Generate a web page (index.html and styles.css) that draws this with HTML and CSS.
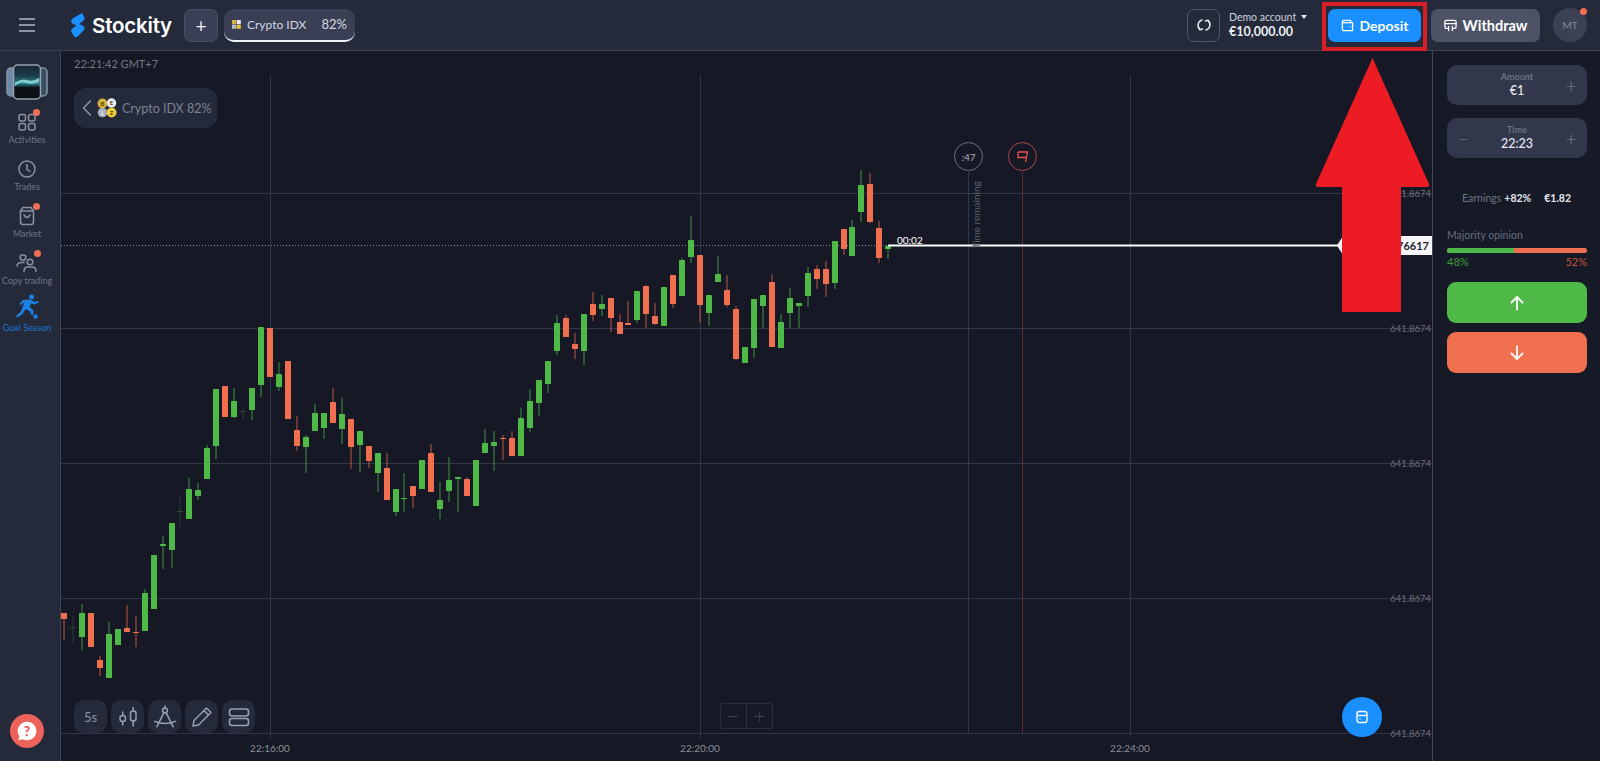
FILE: index.html
```html
<!DOCTYPE html>
<html lang="en">
<head>
    <meta charset="UTF-8">
    <title>Stockity | Trading</title>
    <meta name="viewport" content="width=device-width, initial-scale=1.0">
    <link rel="stylesheet" href="styles.css">
</head>
<body>

    <!-- Top bar -->
    <header class="topbar">
        <div class="menu-icon"><span></span><span></span><span></span></div>

        <div class="brand">
            <svg class="brand-mark" viewBox="0 0 16 26">
                <path d="M12 1 L14.5 5.5 Q15 8 12.5 9.5 L9 12 L12.5 13.5 Q15.5 15 14 18 L7 25 Q4 26 3.5 23.5 L1 19 Q1 17.5 3 16 L6.5 13.5 L3 12 Q0 10 2 7 Z" fill="#1a8fff"/>
            </svg>
            <span class="brand-name">Stockity</span>
        </div>

        <button class="add-tab">+</button>

        <div class="asset-tab">
            <svg class="tab-coins" viewBox="0 0 10 10">
                <rect width="4.6" height="4.6" fill="#d9b23c"/>
                <rect x="5.2" width="4.6" height="4.6" fill="#e8e8e8"/>
                <rect y="5.2" width="4.6" height="4.6" fill="#b9bcc6"/>
                <rect x="5.2" y="5.2" width="4.6" height="4.6" fill="#e9c635"/>
            </svg>
            <span class="tab-name">Crypto IDX</span>
            <span class="tab-pct">82%</span>
        </div>

        <div class="topbar-right">
            <button class="swap-btn">
                <svg viewBox="0 0 16 16" width="16" height="16" fill="none" stroke="#e4e6ee" stroke-width="1.5" stroke-linecap="round" stroke-linejoin="round">
                    <path d="M6 3 A5.5 5.5 0 0 0 4 12.5"/>
                    <path d="M2.5 10 L4 12.8 L6.6 12"/>
                    <path d="M10 13 A5.5 5.5 0 0 0 12 3.5"/>
                    <path d="M13.5 6 L12 3.2 L9.4 4"/>
                </svg>
            </button>
            <div class="account">
                <div class="account-type">Demo account <span class="caret"></span></div>
                <div class="account-balance">€10,000.00</div>
            </div>
            <button class="deposit-btn">
                <svg viewBox="0 0 14 14" width="13" height="13" fill="none" stroke="#fff" stroke-width="1.4" stroke-linejoin="round">
                    <path d="M3 1.5 H10.5 V4 H12.5 V12.5 H3 Q1.5 12.5 1.5 11 V3 Q1.5 1.5 3 1.5 Z"/>
                    <path d="M1.5 4 H10.5"/>
                    <path d="M9.5 8.2 H10.5"/>
                </svg>
                Deposit
            </button>
            <button class="withdraw-btn">
                <svg viewBox="0 0 14 14" width="13" height="13" fill="none" stroke="#fff" stroke-width="1.4" stroke-linejoin="round" stroke-linecap="round">
                    <path d="M4 10 H2.5 Q1 10 1 8.5 V3 Q1 1.5 2.5 1.5 H11.5 Q13 1.5 13 3 V8.5 Q13 10 11.5 10 H10"/>
                    <path d="M1 5 H13"/>
                    <path d="M5 8 V12.5 M9 8 V12.5"/>
                </svg>
                Withdraw
            </button>
            <div class="avatar">MT<span class="dot avatar-dot"></span></div>
        </div>
    </header>

    <div class="workspace">

        <!-- Left menu -->
        <nav class="sidebar">
            <svg class="promo-thumb" viewBox="0 0 42 36">
                <defs>
                    <linearGradient id="promoFill" x1="0" y1="0" x2="0" y2="1">
                        <stop offset="0" stop-color="#14262f"/>
                        <stop offset="0.3" stop-color="#1d3a48"/>
                        <stop offset="0.55" stop-color="#2f7f88"/>
                        <stop offset="0.66" stop-color="#0d1519"/>
                        <stop offset="1" stop-color="#0a0e12"/>
                    </linearGradient>
                </defs>
                <rect x="1" y="4" width="12" height="28" rx="4" fill="#6b8aa8" stroke="#8d93a6" stroke-width="1.5"/>
                <rect x="29" y="4" width="12" height="28" rx="4" fill="#34505f" stroke="#8d93a6" stroke-width="1.5"/>
                <rect x="7.5" y="1" width="27" height="34" rx="4" fill="url(#promoFill)" stroke="#9ba0b0" stroke-width="1.5"/>
                <path d="M9 19 Q15 14 21 16 T33 14 V18 Q26 21 20 19 T9 22 Z" fill="#7fd0d0"/>
            </svg>

            <a class="nav-item">
                <span class="nav-icon">
                    <svg viewBox="0 0 20 20" width="20" height="20" fill="none" stroke="#8b90a3" stroke-width="1.5">
                        <rect x="2" y="2.5" width="6.5" height="6.5" rx="2"/>
                        <rect x="11.5" y="2.5" width="6.5" height="6.5" rx="2"/>
                        <rect x="2" y="11.5" width="6.5" height="6.5" rx="2"/>
                        <rect x="11.5" y="11.5" width="6.5" height="6.5" rx="2"/>
                    </svg>
                    <span class="dot nav-dot"></span>
                </span>
                Activities
            </a>
            <a class="nav-item">
                <span class="nav-icon">
                    <svg viewBox="0 0 20 20" width="20" height="20" fill="none" stroke="#8b90a3" stroke-width="1.5" stroke-linecap="round">
                        <circle cx="10" cy="10" r="8"/>
                        <path d="M10 5.5 V10.5 L13 12.5"/>
                    </svg>
                </span>
                Trades
            </a>
            <a class="nav-item">
                <span class="nav-icon">
                    <svg viewBox="0 0 20 20" width="20" height="20" fill="none" stroke="#8b90a3" stroke-width="1.5" stroke-linecap="round">
                        <path d="M6 1.5 H14 L16.5 5 V16 Q16.5 18.5 14 18.5 H6 Q3.5 18.5 3.5 16 V5 Z"/>
                        <path d="M3.5 5 H16.5"/>
                        <path d="M7 9 Q10 14 13 9"/>
                    </svg>
                    <span class="dot nav-dot"></span>
                </span>
                Market
            </a>
            <a class="nav-item">
                <span class="nav-icon">
                    <svg viewBox="0 0 22 20" width="22" height="20" fill="none" stroke="#8b90a3" stroke-width="1.5" stroke-linecap="round">
                        <circle cx="7" cy="4.5" r="2.8"/>
                        <path d="M1 13 Q1 9.5 6 9.5 H8"/>
                        <circle cx="14" cy="9" r="2.8"/>
                        <path d="M8 18.5 Q8 14 12 14 H16 Q20 14 20 18.5"/>
                    </svg>
                    <span class="dot nav-dot"></span>
                </span>
                Copy trading
            </a>
            <a class="nav-item nav-item-active">
                <span class="nav-icon nav-icon-goal">
                    <svg viewBox="0 0 24 26" width="24" height="26" fill="#1a82e6">
                        <circle cx="16.5" cy="3" r="2.4"/>
                        <path d="M8 6 L15 5.5 L20 8 L23 6.8 L23.5 8.5 L19.5 10.5 L16 9.2 L14.5 13 L18.5 16.5 L18 21 L15.8 21 L15.5 17.5 L10.5 15 L7.5 20 L2 23.5 L1 22 L5.5 18 L8.5 11 L9.5 8 L6 11 L4.5 10 Z"/>
                        <circle cx="20.5" cy="22.5" r="2.2"/>
                    </svg>
                </span>
                Goal Season
            </a>

            <button class="help-btn">
                <svg viewBox="0 0 20 20" width="22" height="22">
                    <path d="M10 1.5 A8.5 8.5 0 1 1 6 17.5 L2 18.5 L3.2 15 A8.5 8.5 0 0 1 10 1.5 Z" fill="#fff"/>
                    <text x="10" y="14.5" class="help-mark">?</text>
                </svg>
            </button>
        </nav>

        <!-- Chart area -->
        <main class="chart">
            <svg class="chart-canvas" viewBox="61 51 1371 710">
                <g class="grid-lines">
                    <line x1="61" y1="193.5" x2="1432" y2="193.5"/>
                    <line x1="61" y1="328.5" x2="1432" y2="328.5"/>
                    <line x1="61" y1="463.5" x2="1432" y2="463.5"/>
                    <line x1="61" y1="598.5" x2="1432" y2="598.5"/>
                    <line x1="61" y1="733.5" x2="1432" y2="733.5"/>
                    <line x1="270.5" y1="75" x2="270.5" y2="738"/>
                    <line x1="700.5" y1="75" x2="700.5" y2="738"/>
                    <line x1="1130.5" y1="75" x2="1130.5" y2="738"/>
                    <line x1="968.5" y1="172" x2="968.5" y2="733"/>
                </g>
                <line class="expiry-line" x1="1022.5" y1="172" x2="1022.5" y2="733"/>

                <line class="price-dots" x1="61" y1="245.5" x2="888" y2="245.5"/>
                <g id="candles"></g>
                <line class="price-line" x1="888" y1="245.5" x2="1340" y2="245.5"/>
                <text class="timer-text" x="897" y="244">00:02</text>

                <circle class="marker" cx="968.5" cy="156.5" r="14"/>
                <text class="marker-text" x="968.5" y="160.5">:47</text>
                <text class="remaining" transform="rotate(-90 977 215)" x="977" y="218">Time remaining</text>

                <circle class="marker marker-red" cx="1022.5" cy="156.5" r="14"/>
                <path class="flag" d="M1018 152 H1027.5 L1025.5 162 M1018 152 V157.5 H1026.5"/>

                <path class="price-tag" d="M1337 245.5 L1343 236 H1432 V255 H1343 Z"/>
                <text class="price-tag-text" x="1429" y="250">641.876617</text>

                <g class="axis-y">
                    <text x="1431" y="197">641.8674</text>
                    <text x="1431" y="332">641.8674</text>
                    <text x="1431" y="467">641.8674</text>
                    <text x="1431" y="602">641.8674</text>
                    <text x="1431" y="737">641.8674</text>
                </g>
                <g class="axis-x">
                    <text x="270" y="752">22:16:00</text>
                    <text x="700" y="752">22:20:00</text>
                    <text x="1130" y="752">22:24:00</text>
                </g>
            </svg>

            <div class="clock">22:21:42 GMT+7</div>

            <div class="asset-back">
                <svg class="back-chevron" viewBox="0 0 10 18" width="10" height="18" fill="none" stroke="#8b90a3" stroke-width="1.6" stroke-linecap="round" stroke-linejoin="round">
                    <path d="M8.5 2 L1.5 9 L8.5 16"/>
                </svg>
                <svg class="back-coins" viewBox="0 0 22 22" width="20" height="20">
                    <circle cx="6" cy="6" r="5.4" fill="#d9b23c"/>
                    <circle cx="16" cy="5.5" r="5.2" fill="#eceff4"/>
                    <circle cx="6" cy="16" r="5.2" fill="#aab0c0"/>
                    <circle cx="16" cy="16" r="5.4" fill="#f0cf3a"/>
                    <text x="6" y="8.5" class="coin-letter">B</text>
                    <text x="16" y="8" class="coin-letter">E</text>
                    <text x="6" y="18.5" class="coin-letter coin-light">L</text>
                    <text x="16" y="18.5" class="coin-letter">Z</text>
                </svg>
                <span>Crypto IDX 82%</span>
            </div>

            <div class="chart-tools">
                <button class="tool-btn">5s</button>
                <button class="tool-btn">
                    <svg viewBox="0 0 22 22" width="22" height="22" fill="none" stroke="#9a9fb1" stroke-width="1.5" stroke-linecap="round">
                        <rect x="3" y="9.5" width="5.5" height="6" rx="2.5"/>
                        <path d="M5.7 6 V9.5 M5.7 15.5 V19"/>
                        <rect x="13.5" y="5" width="5.5" height="10" rx="2.5"/>
                        <path d="M16.2 1.5 V5 M16.2 15 V20"/>
                    </svg>
                </button>
                <button class="tool-btn">
                    <svg viewBox="0 0 22 22" width="24" height="24" fill="none" stroke="#9a9fb1" stroke-width="1.4" stroke-linecap="round" stroke-linejoin="round">
                        <circle cx="11" cy="5" r="2.2"/>
                        <path d="M10 7 L3.5 20 M12 7 L18.5 20"/>
                        <path d="M1.5 15 Q11 19 20.5 15"/>
                        <path d="M11 1 V2.8"/>
                    </svg>
                </button>
                <button class="tool-btn">
                    <svg viewBox="0 0 22 22" width="22" height="22" fill="none" stroke="#9a9fb1" stroke-width="1.5" stroke-linejoin="round">
                        <path d="M15.5 2 L20 6.5 L7.5 19 L2 20 L3 14.5 Z"/>
                        <path d="M13 4.5 L17.5 9"/>
                    </svg>
                </button>
                <button class="tool-btn">
                    <svg viewBox="0 0 22 22" width="22" height="22" fill="none" stroke="#9a9fb1" stroke-width="1.6">
                        <rect x="1.5" y="3" width="19" height="7" rx="2.5"/>
                        <rect x="1.5" y="12.5" width="19" height="7" rx="2.5"/>
                    </svg>
                </button>
            </div>

            <div class="zoom-box">
                <span class="zoom-part">−</span>
                <span class="zoom-part">+</span>
            </div>

            <button class="fab">
                <svg viewBox="0 0 14 14" width="14" height="14" fill="none" stroke="#fff" stroke-width="1.4" stroke-linejoin="round">
                    <rect x="2" y="1.5" width="10" height="11" rx="2.2"/>
                    <path d="M2 5.5 H12"/>
                    <path d="M4.5 9 H5.5"/>
                </svg>
            </button>
        </main>

        <!-- Trade panel -->
        <aside class="panel">
            <div class="stepper">
                <span class="step-sign step-dim">−</span>
                <div class="step-value">
                    <small>Amount</small>
                    <strong>€1</strong>
                </div>
                <span class="step-sign">+</span>
            </div>
            <div class="stepper">
                <span class="step-sign">−</span>
                <div class="step-value">
                    <small>Time</small>
                    <strong>22:23</strong>
                </div>
                <span class="step-sign">+</span>
            </div>

            <div class="earnings">
                <span>Earnings</span>
                <b>+82%</b>
                <b class="earnings-sum">€1.82</b>
            </div>

            <div class="majority-title">Majority opinion</div>
            <div class="majority-bar"><div class="majority-up" style="width: 48%"></div></div>
            <div class="majority-nums">
                <span class="num-up">48%</span>
                <span class="num-down">52%</span>
            </div>

            <button class="trade-btn trade-up">
                <svg viewBox="0 0 16 16" width="16" height="16" fill="none" stroke="#fff" stroke-width="1.8" stroke-linecap="round" stroke-linejoin="round"><path d="M8 14.5 V2 M2.5 7.5 L8 2 L13.5 7.5"/></svg>
            </button>
            <button class="trade-btn trade-down">
                <svg viewBox="0 0 16 16" width="16" height="16" fill="none" stroke="#fff" stroke-width="1.8" stroke-linecap="round" stroke-linejoin="round"><path d="M8 1.5 V14 M2.5 8.5 L8 14 L13.5 8.5"/></svg>
            </button>
        </aside>
    </div>

    <!-- Red annotation drawn over the screenshot -->
    <div class="note-box"></div>
    <svg class="note-arrow" viewBox="0 0 114 256">
        <path d="M56.500 0 L113 126 Q114 129 111 129 H85 V254 H26 V129 H2 Q-1 129 0 126 Z" fill="#ed1c24"/>
    </svg>

    <script src="chart.js"></script>
</body>
</html>
```

FILE: styles.css
```css
* {
    box-sizing: border-box;
}

body {
    margin: 0;
    padding: 0;
    width: 100%;
    height: 100vh;
    overflow: hidden;
    position: relative;
    font-family: Lato, "Noto Sans", sans-serif;
    background-color: #161925;
    color: #fff;
}

button {
    font-family: inherit;
    border: none;
    padding: 0;
    cursor: pointer;
}

/* Top bar */
.topbar {
    height: 51px;
    display: flex;
    align-items: center;
    background-color: #252a3b;
    border-bottom: 1px solid #3e4356;
}

.menu-icon {
    width: 16px;
    margin-left: 19px;
    display: flex;
    flex-direction: column;
    gap: 4px;
}

.menu-icon span {
    height: 2px;
    background-color: #8e93a3;
}

.brand {
    width: 114px;
    margin-left: 35px;
    display: flex;
    align-items: center;
    gap: 6px;
}

.brand-mark {
    width: 16px;
    height: 26px;
}

.brand-name {
    font-family: Inter, sans-serif;
    font-size: 20.500px;
    font-weight: 600;
    letter-spacing: -0.2px;
}

.add-tab {
    width: 34px;
    height: 33px;
    border-radius: 7px;
    background-color: #3a3f56;
    border: 1px solid #4a4f66;
    color: #eceef4;
    font-size: 19px;
    line-height: 1;
}

.asset-tab {
    width: 131px;
    height: 33px;
    margin-left: 6px;
    padding: 0 8px;
    display: flex;
    align-items: center;
    background-color: #3a3f56;
    border-bottom: 2px solid #f0f1f5;
    border-radius: 10px;
    font-size: 13px;
    color: #d5d7e0;
}

.tab-coins {
    width: 9px;
    height: 9px;
}

.tab-name {
    margin-left: 6px;
    font-size: 12px;
}

.tab-pct {
    margin-left: auto;
}

.topbar-right {
    margin-left: auto;
    padding-right: 13px;
    display: flex;
    align-items: center;
}

.swap-btn {
    width: 33px;
    height: 33px;
    margin-right: 9px;
    background: none;
    border: 1px solid #50566c;
    border-radius: 7px;
    display: flex;
    justify-content: center;
    align-items: center;
}

.account {
    width: 99px;
}

.account-type {
    font-size: 10.500px;
    color: #cfd2dc;
    line-height: 14px;
}

.caret {
    display: inline-block;
    margin-left: 2px;
    vertical-align: 2px;
    border-left: 3.500px solid transparent;
    border-right: 3.500px solid transparent;
    border-top: 4px solid #e8e9ef;
}

.account-balance {
    font-size: 12.500px;
    font-weight: 700;
    line-height: 16px;
    color: #eceef4;
}

.deposit-btn,
.withdraw-btn {
    height: 33px;
    border-radius: 7px;
    display: flex;
    justify-content: center;
    align-items: center;
    gap: 6px;
    color: #fff;
    font-size: 14px;
    font-weight: 700;
}

.deposit-btn {
    width: 93px;
    margin-right: 10px;
    background-color: #1a8fff;
}

.withdraw-btn {
    width: 109px;
    margin-right: 13px;
    background-color: #4d5266;
    font-size: 14.500px;
}

.avatar {
    width: 34px;
    height: 34px;
    position: relative;
    border-radius: 50%;
    background-color: #3c4156;
    color: #858a9c;
    font-size: 10px;
    display: flex;
    justify-content: center;
    align-items: center;
}

.dot {
    position: absolute;
    width: 7px;
    height: 7px;
    border-radius: 50%;
    background-color: #ef6f54;
}

.avatar-dot {
    top: 0;
    right: 0;
}

/* Layout under the top bar */
.workspace {
    height: 710px;
    display: flex;
}

/* Left menu */
.sidebar {
    width: 61px;
    position: relative;
    padding: 13px 6px 0 0;
    display: flex;
    flex-direction: column;
    align-items: center;
    background-color: #252a3b;
    border-right: 1px solid #3e4356;
}

.promo-thumb {
    width: 42px;
    height: 36px;
    margin-bottom: 11px;
}

.nav-item {
    height: 47px;
    width: 100%;
    padding-top: 1px;
    display: flex;
    flex-direction: column;
    align-items: center;
    font-size: 9px;
    line-height: 14px;
    white-space: nowrap;
    color: #6f7488;
}

.nav-item-active {
    color: #1a72cc;
}

.nav-icon {
    height: 20px;
    margin-bottom: 1px;
    position: relative;
    display: block;
}

.nav-icon svg {
    display: block;
}

.nav-icon-goal {
    height: 26px;
    margin-top: -6px;
}

.nav-dot {
    top: -3px;
    right: -3px;
}

.help-btn {
    position: absolute;
    left: 10px;
    bottom: 13px;
    width: 34px;
    height: 34px;
    border-radius: 50%;
    background-color: #ee625c;
    display: flex;
    justify-content: center;
    align-items: center;
}

.help-mark {
    font-size: 12px;
    font-weight: 900;
    text-anchor: middle;
    fill: #e8554f;
}

/* Chart */
.chart {
    flex: 1;
    position: relative;
    overflow: hidden;
    background-color: #161925;
}

.chart-canvas {
    display: block;
    width: 1371px;
    height: 710px;
}

.grid-lines line {
    stroke: #32364a;
    stroke-width: 1;
}

.expiry-line {
    stroke: #5a2c35;
    stroke-width: 1;
}

.price-dots {
    stroke: #8a8d96;
    stroke-width: 1;
    stroke-dasharray: 1 2;
}

.price-line {
    stroke: #fff;
    stroke-width: 2;
}

.timer-text {
    font-size: 10px;
    fill: #fff;
}

.marker {
    fill: none;
    stroke: #6a6e7c;
    stroke-width: 1;
}

.marker-red {
    stroke: #a8494a;
}

.marker-text {
    font-size: 10px;
    font-weight: 700;
    text-anchor: middle;
    fill: #8c8f9b;
}

.remaining {
    font-size: 10px;
    text-anchor: middle;
    fill: #5c606c;
}

.flag {
    fill: none;
    stroke: #e8504c;
    stroke-width: 1.3;
}

.price-tag {
    fill: #f5f5f7;
}

.price-tag-text {
    font-size: 11px;
    font-weight: 700;
    text-anchor: end;
    fill: #23262f;
}

.axis-y text {
    font-size: 9.500px;
    text-anchor: end;
    fill: #6d707b;
}

.axis-x text {
    font-size: 10px;
    text-anchor: middle;
    fill: #8b8e98;
}

.clock {
    position: absolute;
    top: 6px;
    left: 13px;
    font-size: 11px;
    color: #737785;
}

.asset-back {
    position: absolute;
    top: 37px;
    left: 13px;
    width: 143px;
    height: 40px;
    padding-left: 8px;
    display: flex;
    align-items: center;
    gap: 5px;
    border-radius: 12px;
    background-color: #252a3a;
    color: #7e8292;
    font-size: 12.500px;
}

.coin-letter {
    font-size: 6.500px;
    font-weight: 900;
    text-anchor: middle;
    fill: #5c4a10;
}

.coin-light {
    fill: #f0f0f5;
}

.chart-tools {
    position: absolute;
    left: 13px;
    bottom: 28px;
    display: flex;
    gap: 4px;
}

.tool-btn {
    width: 33px;
    height: 33px;
    border-radius: 10px;
    background-color: #252a3a;
    color: #8b90a2;
    font-size: 13px;
    display: flex;
    justify-content: center;
    align-items: center;
}

.zoom-box {
    position: absolute;
    left: 659px;
    bottom: 32px;
    width: 53px;
    height: 26px;
    display: flex;
    border: 1px solid #2a2e3a;
    border-radius: 3px;
}

.zoom-part {
    flex: 1;
    display: flex;
    justify-content: center;
    align-items: center;
    font-size: 22px;
    font-weight: 300;
    line-height: 1;
    color: #3d414e;
}

.zoom-part + .zoom-part {
    border-left: 1px solid #2a2e3a;
}

.fab {
    position: absolute;
    left: 1281px;
    bottom: 24px;
    width: 40px;
    height: 40px;
    border-radius: 50%;
    background-color: #1a8fff;
    display: flex;
    justify-content: center;
    align-items: center;
}

/* Trade panel */
.panel {
    width: 168px;
    padding: 14px 13px 0 14px;
    background-color: #161a26;
    border-left: 1px solid #3e4356;
}

.stepper {
    height: 40px;
    margin-bottom: 13px;
    padding: 0 9px;
    display: flex;
    align-items: center;
    justify-content: space-between;
    border-radius: 10px;
    background-color: #32374b;
}

.step-sign {
    width: 14px;
    font-size: 20px;
    font-weight: 300;
    line-height: 1;
    text-align: center;
    color: #7b8092;
}

.step-dim {
    color: #474c60;
}

.step-value {
    display: flex;
    flex-direction: column;
    align-items: center;
}

.step-value small {
    font-size: 9px;
    line-height: 12px;
    font-weight: 700;
    color: #6c7184;
}

.step-value strong {
    font-size: 12.500px;
    line-height: 16px;
    font-weight: 500;
    color: #e6e8ee;
}

.earnings {
    margin-top: 33px;
    padding-left: 15px;
    display: flex;
    align-items: center;
    font-size: 10.500px;
    color: #6d7284;
    line-height: 14px;
}

.earnings b {
    margin-left: 3px;
    color: #e4e6ec;
}

.earnings .earnings-sum {
    margin-left: 13px;
}

.majority-title {
    margin-top: 23px;
    font-size: 10.500px;
    line-height: 14px;
    color: #686d7f;
}

.majority-bar {
    height: 5px;
    margin-top: 6px;
    border-radius: 3px;
    overflow: hidden;
    background-color: #ef6f4f;
}

.majority-up {
    height: 100%;
    background-color: #4eb84b;
}

.majority-nums {
    margin-top: 2px;
    display: flex;
    justify-content: space-between;
    font-size: 11px;
    line-height: 14px;
}

.num-up {
    color: #3f9c3e;
}

.num-down {
    color: #c2533f;
}

.trade-btn {
    width: 100%;
    height: 41px;
    margin-top: 9px;
    border-radius: 9px;
    display: flex;
    justify-content: center;
    align-items: center;
}

.trade-up {
    margin-top: 13px;
    background-color: #4fb948;
}

.trade-down {
    background-color: #ef6f4f;
}

/* Red annotation */
.note-box {
    position: absolute;
    top: 2px;
    left: 1322px;
    width: 105px;
    height: 49px;
    border: 4px solid #d81e27;
}

.note-arrow {
    position: absolute;
    top: 58px;
    left: 1316px;
    width: 114px;
    height: 256px;
}
```

FILE: chart.js
```js
// wick top, body top, body bottom, wick bottom, colour (f = faint doji)
const candles = [
    [613, 613, 619, 640, 'r'], [617, 627, 628, 643, 'f'], [604, 613, 637, 650, 'g'],
    [613, 613, 647, 647, 'r'], [656, 660, 668, 676, 'r'], [622, 634, 678, 678, 'g'],
    [629, 629, 645, 645, 'g'], [605, 628, 632, 632, 'r'], [616, 632, 633, 647, 'r'],
    [589, 593, 631, 631, 'g'], [555, 555, 609, 609, 'g'], [536, 544, 546, 569, 'g'],
    [523, 523, 550, 568, 'g'], [495, 511, 512, 527, 'f'], [478, 489, 519, 519, 'g'],
    [483, 490, 496, 500, 'g'], [445, 448, 479, 479, 'g'], [389, 389, 446, 459, 'g'],
    [386, 386, 417, 417, 'r'], [388, 401, 417, 418, 'g'], [407, 411, 412, 420, 'f'],
    [388, 388, 410, 420, 'g'], [327, 327, 385, 397, 'g'], [328, 328, 377, 377, 'r'],
    [362, 374, 387, 391, 'g'], [361, 361, 419, 419, 'r'], [416, 430, 446, 451, 'r'],
    [435, 437, 447, 473, 'g'], [404, 413, 431, 431, 'g'], [413, 413, 428, 439, 'g'],
    [388, 402, 423, 423, 'r'], [398, 414, 429, 444, 'g'], [419, 419, 447, 469, 'r'],
    [431, 431, 445, 472, 'g'], [446, 446, 461, 468, 'r'], [453, 453, 473, 492, 'g'],
    [453, 468, 500, 500, 'r'], [489, 489, 512, 516, 'g'], [473, 498, 499, 512, 'g'],
    [486, 486, 496, 508, 'r'], [460, 460, 489, 489, 'g'], [444, 453, 492, 492, 'r'],
    [482, 500, 509, 519, 'g'], [457, 480, 491, 502, 'g'], [477, 477, 479, 512, 'g'],
    [477, 479, 496, 496, 'r'], [460, 460, 506, 506, 'g'], [429, 443, 453, 453, 'g'],
    [431, 442, 446, 471, 'g'], [435, 438, 439, 460, 'r'], [431, 438, 456, 456, 'r'],
    [408, 418, 456, 456, 'g'], [389, 401, 428, 432, 'g'], [380, 380, 403, 416, 'g'],
    [361, 361, 384, 393, 'g'], [315, 323, 351, 355, 'g'], [315, 318, 337, 337, 'r'],
    [333, 344, 349, 359, 'r'], [314, 314, 351, 365, 'g'], [292, 304, 315, 321, 'r'],
    [295, 304, 309, 316, 'g'], [298, 298, 318, 332, 'r'], [314, 322, 334, 334, 'r'],
    [301, 323, 325, 325, 'r'], [291, 291, 320, 323, 'g'], [285, 286, 314, 328, 'r'],
    [303, 316, 324, 325, 'r'], [287, 287, 326, 326, 'g'], [275, 275, 304, 308, 'r'],
    [258, 260, 296, 296, 'g'], [216, 240, 257, 263, 'g'], [255, 255, 305, 323, 'r'],
    [295, 295, 313, 326, 'g'], [256, 274, 282, 282, 'g'], [275, 290, 305, 307, 'r'],
    [306, 309, 359, 360, 'r'], [347, 347, 363, 363, 'g'], [299, 299, 348, 358, 'g'],
    [295, 295, 306, 328, 'g'], [274, 282, 347, 347, 'r'], [314, 322, 348, 348, 'g'],
    [288, 298, 313, 328, 'g'], [303, 303, 306, 328, 'g'], [267, 273, 296, 307, 'g'],
    [265, 269, 279, 289, 'r'], [261, 269, 284, 297, 'r'], [241, 241, 283, 289, 'g'],
    [229, 229, 249, 255, 'r'], [220, 227, 256, 256, 'g'], [170, 185, 212, 222, 'g'],
    [173, 184, 222, 223, 'r'], [221, 228, 258, 263, 'r'], [246, 246, 249, 259, 'g']
];

const colours = { g: '#4fb948', r: '#ef6f4f', f: '#2f4a35' };
const layer = document.getElementById('candles');
const svgNS = 'http://www.w3.org/2000/svg';

function addShape(tag, attrs) {
    const el = document.createElementNS(svgNS, tag);
    Object.keys(attrs).forEach((key) => el.setAttribute(key, attrs[key]));
    layer.appendChild(el);
}

candles.forEach((c, i) => {
    const x = Math.round(64 + i * 8.96);

    // thin wick first, then the body on top of it
    addShape('rect', {
        x: x - 0.5, y: c[0], width: 1, height: c[3] - c[0],
        fill: colours[c[4]], opacity: 0.75
    });
    addShape('rect', {
        x: x - 3, y: c[1], width: 6, height: Math.max(c[2] - c[1], 1),
        rx: 0.5, fill: colours[c[4]]
    });
});
```
